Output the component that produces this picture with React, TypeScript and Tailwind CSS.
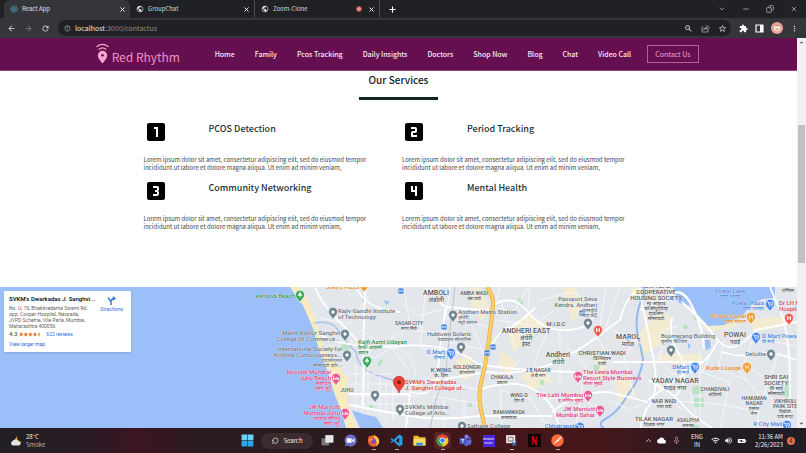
import type { ReactNode } from "react";
import { SiReact } from "react-icons/si";
import {
  MdLooks3,
  MdLooks4,
  MdLooksOne,
  MdLooksTwo,
  MdPublic,
  MdArrowBack,
  MdArrowForward,
  MdRefresh,
  MdInfoOutline,
  MdExtension,
  MdMoreVert,
  MdStarBorder,
  MdZoomOut,
  MdCloud,
  MdMicNone,
  MdWifi,
  MdVolumeUp,
  MdBatteryChargingFull,
  MdArrowDropUp,
  MdArrowDropDown,
} from "react-icons/md";
import { ChevronDown, ChevronUp, Copy, Minus, Plus, Search, X } from "lucide-react";

const sans = "font-['Noto_Sans_CJK_JP',sans-serif]";

/* ---------- browser chrome ---------- */

function Tab({ title, icon, active, recording }: { title: string; icon: ReactNode; active?: boolean; recording?: boolean }) {
  return (
    <div
      className={
        active
          ? "flex h-[18px] w-[126px] items-center gap-1 rounded-t-md bg-[#35363a] pr-1 pl-1.5 text-[#dfe1e5]"
          : "flex h-[18px] w-[125px] items-center gap-1 border-r border-[#4a4b4f] pr-1 pl-1.5 text-[#d4d7db]"
      }
    >
      {icon}
      <span className="flex-1 text-[6px] leading-[8px]">{title}</span>
      {recording && <span className="mr-0.5 size-[6px] rounded-full border border-[#a14a48] bg-[#f08a84]" />}
      <button aria-label={`Close ${title}`} className="text-white">
        <X size={7} strokeWidth={3} />
      </button>
    </div>
  );
}

function BrowserChrome() {
  return (
    <div className="shrink-0 bg-[#202124]">
      <div className="flex h-[18px] items-center pl-1">
        <Tab active title="React App" icon={<SiReact size={8} className="text-[#4fb0c8]" />} />
        <Tab title="GroupChat" icon={<MdPublic size={8} className="text-[#d5d7da]" />} />
        <Tab recording title="Zoom-Clone" icon={<MdPublic size={8} className="text-[#d5d7da]" />} />
        <button aria-label="New tab" className="ml-2 text-white">
          <Plus size={9} strokeWidth={3} />
        </button>
        <div className="ml-auto flex items-center gap-4 pr-2 text-[#c9cbce]">
          <button aria-label="Search tabs"><ChevronDown size={8} /></button>
          <button aria-label="Minimize"><Minus size={8} /></button>
          <button aria-label="Restore"><Copy size={8} className="-scale-x-100" /></button>
          <button aria-label="Close window"><X size={8} /></button>
        </div>
      </div>
      <div className="flex h-5 items-center gap-2 bg-[#35363a] px-[7px] text-[#dcdee1]">
        <button aria-label="Back"><MdArrowBack size={9} /></button>
        <button aria-label="Forward" className="text-[#7c7e82]"><MdArrowForward size={9} /></button>
        <button aria-label="Reload"><MdRefresh size={9} /></button>
        <div className="flex h-4 flex-1 items-center gap-2 rounded-full bg-[#202124] pr-1 pl-1.5">
          <MdInfoOutline size={7} className="text-[#a5a8ac]" />
          <div className="-ml-1 flex-1 text-[7px] leading-[10px] text-[#8b8e93]">
            <span className="text-[#e6e8eb]">localhost</span>:3000/contactus
          </div>
          <button aria-label="Zoom"><MdZoomOut size={9} /></button>
          <button aria-label="Share">
            <svg width="9" height="9" viewBox="0 0 18 18" fill="none" stroke="#a9abaf" strokeWidth="1.6">
              <path d="M5 6H2v10h12v-4M5 12c1-4 4-5 7-5V3l5 5-5 4V9C9 9 7 10 5 12z" />
            </svg>
          </button>
          <button aria-label="Bookmark"><MdStarBorder size={9} /></button>
        </div>
        <div className="flex items-center gap-[7px]">
          <button aria-label="Extensions"><MdExtension size={9} className="text-white" /></button>
          <button aria-label="Side panel">
            <svg width="9" height="9" viewBox="0 0 9 9"><path d="M1 1h7v7H1z" fill="none" stroke="#fff" strokeWidth="1.2" /><path d="M5 1h3v7H5z" fill="#fff" /></svg>
          </button>
          <button aria-label="Profile">
            <svg width="12" height="12" viewBox="0 0 12 12">
              <circle cx="6" cy="6" r="6" fill="#eaa39b" />
              <circle cx="6" cy="6" r="3.2" fill="#f4e2d2" />
              <path d="M3 4q3-3 6 0z" fill="#c98773" />
              <path d="M4.6 7.2h2.8" stroke="#96695b" strokeWidth=".6" />
            </svg>
          </button>
          <button aria-label="Menu"><MdMoreVert size={9} /></button>
        </div>
      </div>
    </div>
  );
}

/* ---------- site header ---------- */

const links = ["Home", "Family", "Pcos Tracking", "Daily Insights", "Doctors", "Shop Now", "Blog", "Chat", "Video Call"];

function SiteHeader() {
  return (
    <header className="flex h-[33px] shrink-0 items-center border-b border-[#8b4a7b] bg-[#650f50] pl-[12%]">
      <a href="#home" className="flex w-[119px] items-center text-[#f08fc2]">
        <svg width="13" height="22" viewBox="0 0 13 22" fill="none" stroke="#f9a4cf" strokeLinecap="round">
          <path d="M1 3.500Q6.500-.8 12 3.500M3 6.200Q6.500 3.400 10 6.200" strokeWidth="1.300" />
          <path d="M6.500 20.500C4 17 1.800 15 1.800 12.500a4.700 4.700 0 0 1 9.400 0C11.200 15 9 17 6.500 20.500z" fill="#f9a4cf" stroke="none" />
          <circle cx="6.500" cy="12.300" r="1.300" fill="#650f50" stroke="none" />
        </svg>
        <span className="mt-1.5 ml-[3px] text-[12px] leading-4 whitespace-nowrap">Red Rhythm</span>
      </a>
      <nav className="flex items-center gap-5 text-[7px] leading-3 font-medium whitespace-nowrap text-[#fbeaf5]">
        {links.map((l) => (
          <a key={l} href={`#${l}`}>{l}</a>
        ))}
        <a href="#contact" className="-ml-1 border border-[#b4619a] px-[7px] py-[2px] font-normal text-[#f0a5d0]">
          Contact Us
        </a>
      </nav>
    </header>
  );
}

/* ---------- services ---------- */

const services = [
  { title: "PCOS Detection", Icon: MdLooksOne },
  { title: "Period Tracking", Icon: MdLooksTwo },
  { title: "Community Networking", Icon: MdLooks3 },
  { title: "Mental Health", Icon: MdLooks4 },
];

function Services() {
  return (
    <section className="shrink-0 bg-white pb-14">
      <h2 className="text-center text-[10px] leading-[18px] font-medium text-[#14211f]">Our Services</h2>
      <div className="mx-auto mt-2 h-[3px] w-[79px] bg-[#10261f]" />
      <div className="mx-auto mt-5 grid max-w-[510px] grid-cols-2 gap-[7px]">
        {services.map(({ title, Icon }) => (
          <article key={title}>
            <div className="flex h-6 gap-[41px]">
              <Icon size={24} className="text-black" />
              <h3 className="text-[9px] leading-[18px] font-medium text-[#1c3038]">{title}</h3>
            </div>
            <p className="mt-3 pr-5 text-[6px] leading-[8px] text-[#444]">
              Lorem ipsum dolor sit amet, consectetur adipiscing elit, sed do eiusmod tempor incididunt ut labore et dolore magna aliqua. Ut enim ad minim veniam,
            </p>
          </article>
        ))}
      </div>
    </section>
  );
}

/* ---------- map ---------- */

type Label = { x: number; y: number; lines: string[]; color?: string; align?: "l" | "c" | "r"; big?: boolean; small?: boolean };

const GREY = "#5f6f7a";
const DARK = "#4d5256";
const PINK = "#e0347a";
const BLUE = "#3b7de0";
const GREEN = "#278a45";
const ORANGE = "#e08316";
const RED = "#d63a34";

/* x is the anchor edge and y the top of the first line, in map canvas pixels */
const labels: Label[] = [
  { x: 295, y: 6, lines: ["Versova Beach"], color: GREEN, align: "r" },
  { x: 326, y: -3, lines: ["Joey's Pizza"], color: ORANGE },
  { x: 436, y: 3, lines: ["AMBOLI", "अंबोली"], align: "c", big: true },
  { x: 474, y: 4, lines: ["AMBA WADI", "अंबा वाडी"], align: "c", small: true },
  { x: 338, y: 21, lines: ["Rajiv Gandhi Institute", "of Technology"], color: GREY },
  { x: 409, y: 34, lines: ["SAGAR CITY", "सागर सिटी"], align: "c", small: true },
  { x: 340, y: 43, lines: ["Malini Kishor Sanghvi", "College Of Commerce..."], color: GREY, align: "r" },
  { x: 358, y: 52, lines: ["Kaifi Azmi Udayan", "कैफी आझमी", "उद्यान"], color: GREEN },
  { x: 342, y: 59, lines: ["International Society for", "Krishna Consciousness...", "इंटरनॅशनल", "सोसायटी फॉर..."], color: GREY, align: "r" },
  { x: 331, y: 82, lines: ["Novotel Mumbai", "Juhu Beach", "नोव्होटेल", "मुंबई जुहू"], color: PINK, align: "r" },
  { x: 347, y: 101, lines: ["JUHU"], align: "c", small: true },
  { x: 340, y: 117, lines: ["JW Marriott", "Mumbai Juhu", "जेडब्ल्यू मॅरियट", "मुंबई जुहू"], color: PINK, align: "r" },
  { x: 405, y: 92, lines: ["SVKM's Dwarkadas", "J. Sanghvi College of..."], color: RED },
  { x: 405, y: 117, lines: ["SVKM's Mithibai", "College of Arts..."], color: GREY },
  { x: 458, y: 22, lines: ["Andheri Metro Station", "अंधेरी", "मेट्रो स्टेशन"], color: GREY },
  { x: 471, y: 44, lines: ["Hubtown Solaris", "हबटाउन सोलारिस"], color: GREY, align: "r" },
  { x: 445, y: 62, lines: ["D Mart", "डीमार्ट"], color: BLUE, align: "r" },
  { x: 441, y: 80, lines: ["K WING", "के. विंग"], align: "c" },
  { x: 467, y: 78, lines: ["KOLDONGRI", "कोलडोंगरी"], align: "c", small: true },
  { x: 526, y: 41, lines: ["ANDHERI EAST", "अंधेरी", "ईस्ट"], align: "c", big: true },
  { x: 556, y: 34, lines: ["M.I.D.C"], align: "c" },
  { x: 597, y: 9, lines: ["Passport Seva", "Kendra, Andheri", "पासपोर्ट", "सेवा केंद्र"], color: GREY, align: "r" },
  { x: 558, y: 65, lines: ["Andheri", "अंधेरी"], align: "c", big: true },
  { x: 602, y: 63, lines: ["CHRISTIAN WADI", "क्रिश्चियन", "वाडी"], align: "c" },
  { x: 538, y: 81, lines: ["J B NAGAR", "जे बी नगर"], align: "c", small: true },
  { x: 502, y: 88, lines: ["CHAKALA", "चकाला"], align: "c", small: true },
  { x: 519, y: 106, lines: ["WING-D", "विंग-डी"], align: "c", small: true },
  { x: 509, y: 123, lines: ["BAMANWADA", "बामणवाडा"], align: "c", small: true },
  { x: 583, y: 82, lines: ["The Leela Mumbai", "Resort Style Business", "लीला मुंबई"], color: PINK },
  { x: 583, y: 105, lines: ["The Lalit Mumbai", "द ललित मुंबई"], color: PINK, align: "r" },
  { x: 595, y: 119, lines: ["JW Marriott", "Mumbai Sahar"], color: PINK, align: "r" },
  { x: 467, y: 136, lines: ["Sathaye College"], color: GREY },
  { x: 576, y: 136, lines: ["Chhatrapati"], color: BLUE, align: "r" },
  { x: 656, y: -4, lines: ["NEW AZAD", "COOPERATIVE", "HOUSING SOCIETY", "न्यू आझाद", "कोऑपरेटिव्ह", "हाउसिंग", "सोसायटी"], align: "c" },
  { x: 628, y: 47, lines: ["MAROL", "मरोळ"], align: "c", big: true },
  { x: 730, y: 1, lines: ["Powai Lake", "पवई तलाव"], color: BLUE, align: "c" },
  { x: 788, y: 1, lines: ["एम्पिस"], align: "c" },
  { x: 764, y: 13, lines: ["Powai Plaza", "पवई प्लाझा"], color: BLUE, align: "r" },
  { x: 746, y: 26, lines: ["Powai Social", "पवई सोशल"], color: ORANGE, align: "r" },
  { x: 779, y: 13, lines: ["Dr LH Hiranandani", "Hospital"], color: RED },
  { x: 735, y: 45, lines: ["POWAI", "पवई"], align: "c", big: true },
  { x: 762, y: 46, lines: ["D Mart Powai", "डी मार्ट"], color: BLUE },
  { x: 661, y: 46, lines: ["Boomerang Building", "बूमरँग बिल्डिंग"], color: GREY },
  { x: 766, y: 64, lines: ["Deloitte"], color: GREY, align: "r" },
  { x: 689, y: 77, lines: ["DMart", "डी मार्ट"], color: BLUE, align: "r" },
  { x: 741, y: 78, lines: ["Rude Lounge"], color: ORANGE, align: "r" },
  { x: 675, y: 91, lines: ["YADAV NAGAR", "यादव नगर"], align: "c", big: true },
  { x: 776, y: 87, lines: ["SHRI SAI", "SOCIETY", "श्री साई", "सोसायटी"], align: "c" },
  { x: 715, y: 100, lines: ["CHANDIVALI", "चांदिवली"], align: "c", small: true },
  { x: 664, y: 112, lines: ["NAIR WADI", "नायर वाडी"], align: "c", small: true },
  { x: 754, y: 109, lines: ["HANUMAN", "NAGAR", "हनुमान", "नगर"], align: "c", small: true },
  { x: 785, y: 112, lines: ["VIKHROLI", "PARK SITE", "विक्रोळी", "पार्क साइट"], align: "c", small: true },
  { x: 654, y: 129, lines: ["TILAK NAGAR", "टिळक नगर"], align: "c" },
  { x: 688, y: 131, lines: ["ASALPHA", "असल्फा"], align: "c", small: true },
  { x: 782, y: 134, lines: ["R City Mall"], color: BLUE, align: "r" },
];

type Kind = "place" | "hotel" | "shop" | "food" | "hospital" | "park";
const pins: { x: number; y: number; fill: string; kind: Kind }[] = [
  { x: 300, y: 16, fill: "#34a853", kind: "park" },
  { x: 364, y: 6, fill: "#f29a26", kind: "food" },
  { x: 333, y: 33, fill: "#6b838f", kind: "place" },
  { x: 345, y: 55, fill: "#6b838f", kind: "place" },
  { x: 347, y: 76, fill: "#6b838f", kind: "place" },
  { x: 367, y: 82, fill: "#34a853", kind: "park" },
  { x: 336, y: 99, fill: "#ec5a92", kind: "hotel" },
  { x: 345, y: 134, fill: "#ec5a92", kind: "hotel" },
  { x: 375, y: 116, fill: "#6b838f", kind: "place" },
  { x: 400, y: 130, fill: "#6b838f", kind: "place" },
  { x: 453, y: 36, fill: "#6b838f", kind: "place" },
  { x: 461, y: 68, fill: "#6b838f", kind: "place" },
  { x: 451, y: 74, fill: "#4285f4", kind: "shop" },
  { x: 462, y: 147, fill: "#6b838f", kind: "place" },
  { x: 588, y: 44, fill: "#6b838f", kind: "place" },
  { x: 598, y: 51, fill: "#ee5a52", kind: "hospital" },
  { x: 578, y: 97, fill: "#ec5a92", kind: "hotel" },
  { x: 588, y: 116, fill: "#ec5a92", kind: "hotel" },
  { x: 600, y: 131, fill: "#ec5a92", kind: "hotel" },
  { x: 580, y: 148, fill: "#4285f4", kind: "shop" },
  { x: 770, y: 25, fill: "#4285f4", kind: "shop" },
  { x: 751, y: 38, fill: "#f29a26", kind: "food" },
  { x: 789, y: 39, fill: "#ee5a52", kind: "hospital" },
  { x: 756, y: 58, fill: "#4285f4", kind: "shop" },
  { x: 671, y: 71, fill: "#6b838f", kind: "place" },
  { x: 771, y: 75, fill: "#6b838f", kind: "place" },
  { x: 695, y: 88, fill: "#4285f4", kind: "shop" },
  { x: 747, y: 88, fill: "#f29a26", kind: "food" },
  { x: 787, y: 146, fill: "#4285f4", kind: "shop" },
];

const glyphs: Record<Kind, ReactNode> = {
  place: <circle cy="-8" r="1.700" fill="#fff" />,
  hotel: <path d="M-2.500-9.500v3.500M-2.500-7h5v1M-.5-8h3v1" stroke="#fff" strokeWidth=".9" fill="none" />,
  shop: <path d="M-2.800-10h1.200l.8 3h3l.6-2.200h-3.800M-.6-5.500v.2M1.800-5.500v.2" stroke="#fff" strokeWidth=".8" strokeLinecap="round" fill="none" />,
  food: <path d="M-1.300-10.200v4.800M1.300-10.200v4.800M-1.300-8h2.600" stroke="#fff" strokeWidth=".8" fill="none" />,
  hospital: <path d="M-1.400-10v4M1.400-10v4M-1.400-8h2.800" stroke="#fff" strokeWidth="1" fill="none" />,
  park: <path d="M0-10.800l2 3.300h-4zM0-8v3" fill="#fff" stroke="#fff" strokeWidth=".6" />,
};

function MapDrawing() {
  return (
    <svg width="797" height="141" viewBox="0 287 797 141" className="absolute inset-0" fill="none" aria-hidden="true">
      <path d="M290 287L303 305L313 328L320 352L328 372L335 395L342 412L346 428H797V287z" fill="#e3e6eb" />
      <path d="M290 287L303 305L313 328L320 352L328 372L335 395L342 412L346 428H358L350 411L346 392L348 378L338 366L326 352L318 328L310 304L300 287z" fill="#f8ebc0" />
      <g fill="#f3ecd3">
        <path d="M470 287h10l10 22-8 12-11-14zM508 330l22-16 14 10-16 18-16 10zM562 288h14l6 24-10 10zM520 376l20-10 14 14-22 10zM456 360l14-4 4 20-12 6zM640 332l20-20 14 6-10 24-22 14zM658 354h44v8h-44zM614 380l14-6 8 20-16 10zM700 322l28-6 10 10-30 6zM748 320l34-4 4 10-32 6zM500 350l16 10-6 16-12-8zM596 350h12l-4 30h-10zM630 287h12l-6 14z" />
      </g>
      <g fill="#b9e3c4">
        <path d="M343 341l7 6-3 6-7-4zM367 358l6 1-1 3-5-1zM377 364l5-6 1 4-4 5zM344 343l6 4-3 3zM367 402l7 4-2 3-6-4zM518 298h5v8h-4zM594 364l6 2-2 8-5-4zM684 324l4 2-1 4-4-2zM692 387l9-2 2 8-10 2zM694 398h10v9h-11zM786 380l5 2-2 16-6-2zM692 425h9v3h-9zM362 295h3v7h-3zM468 402h4v5h-4zM694 312h4v8h-4zM540 380h4v5h-4z" />
      </g>
      <path d="M352 410L363 414L376 417L383 428H360z" fill="#9bbff9" />
      <path d="M673 287L679 303L690 306L700 317L708 326L724 325L742 316L750 306L762 299L775 298L775 287zM704 340l6 0 1 8-5 2-3-4zM688 343l3 3-3 3zM384 300l6 2-4 3z" fill="#9bbff9" />
      <path d="M314 323Q332 320 338 330T356 352Q358 368 374 374T402 382L410 385" stroke="#abc4ee" strokeWidth="1.500" />
      <path d="M641 300Q634 320 638 336T643 360Q640 380 627 396Q618 412 607 418T604 428M642 287Q648 293 641 300" stroke="#96b9f0" strokeWidth="2" />

      <g stroke="#f7f8fa" strokeWidth=".9">
        <path d="M349 374h43M349 384h70M352 396h68M354 404h60M356 364v48M362 362v50M368 368v44M380 376v40M386 380v40M393 384v36M350 340l24 18M374 358l18-10 18 24M392 348q20 0 24 28M398 300l20 16 30-8M404 287l6 40-20 12M426 287l-6 60 24 10M412 330l36 4M430 380l50 10M432 396l48 8M444 400v28M464 396v32M426 356l20-14 40 8M450 287l-4 30 44 10M500 287l-6 20 20 6 14-26M498 320l36 6 20-16M530 287l-6 60M540 300l32-8 22 12M548 330l-14 34 20 22M560 330v54M500 390l30 8 18 30M520 360l-20 24 2 44M540 400l40-6 20 20M606 287l-8 50 14 30M612 330l30 14M620 287l-14 40M644 330l-20 26 10 40M650 350l22 24 30-2M650 380l32 30M660 360l4-30 14-4M700 350v70M712 352l-10 20 26 10M724 340l-6 30 30 10M730 380l-10 48M738 370l20 24v34M756 330l-12 34 30 20M764 340l32 6M780 350l-16 44 30 16M660 400l60 4M690 392l10 36M720 404l40 8M610 400l20 10 16-8M500 300l16 50M566 346l20 20-10 60M466 310l20 50M320 318l30 6 20-30M360 330l20 12" />
      </g>
      <g stroke="#fff" strokeWidth="1.800">
        <path d="M315 287Q322 304 334 316T360 344L370 352M365 287L364 326Q362 346 364 370L363 408M318 334Q350 350 400 346T478 364Q500 368 530 370T580 372M432 287Q436 302 446 307L492 311M446 307Q440 340 438 370T410 392L406 428M350 405Q380 411 410 416T480 416L552 416M356 287Q366 310 400 312M348 394h62M410 385l70-12M492 306q20-14 36 6t40 18 24 -14M487 352q16-26 20-24t28-20M478 390q30-10 48-4t28 24l6 18M486 372Q530 376 560 360T606 330L620 320Q626 294 644 287M552 412q24-20 56-20l40 10M640 294Q648 330 654 362T646 410L640 428M648 380Q670 390 682 404T712 428M612 362h92M682 302Q704 322 718 340T756 330L797 322M672 318q-4 20 8 38t-4 40M718 340q-8 20-26 30t-44 30M770 287L784 320Q790 350 790 380T788 428M722 352q20 6 34 2t40 6" />
        <path d="M704 349Q704 330 692 306T666 300L640 310" strokeWidth="2.400" />
      </g>
      <path d="M455 287L450 330L446 370L436 400L430 428" stroke="#bfc4cb" strokeWidth="1" />
      <path d="M487 287Q494 297 493 305Q491 325 488 346Q486 364 481 383Q478 396 481 410L485 428" stroke="#e8a93a" strokeWidth="4" />
      <path d="M487 287Q494 297 493 305Q491 325 488 346Q486 364 481 383Q478 396 481 410L485 428" stroke="#fcd067" strokeWidth="2.600" />

      {[[401, 291], [444, 327], [493, 347], [487, 353], [582, 313]].map(([x, y]) => (
        <g key={x}>
          <rect x={x - 2.5} y={y - 2.5} width="5" height="5" rx=".6" fill="#2f7be5" />
          <path d={`M${x - 1.3} ${y + 1.3}v-2.4l1.300 1.600 1.300-1.600v2.400`} stroke="#fff" strokeWidth=".7" />
        </g>
      ))}
      {pins.map((p) => (
        <g key={`${p.x}-${p.y}`} transform={`translate(${p.x} ${p.y + 287})`}>
          <path d="M0 0C-.5-3-4.500-4.500-4.500-8.200a4.500 4.500 0 0 1 9 0C4.500-4.500.5-3 0 0z" fill={p.fill} stroke="#fff" strokeWidth=".6" />
          {glyphs[p.kind]}
        </g>
      ))}
      <g transform="translate(399 393)">
        <path d="M0 0C-.8-4.500-5.700-6.500-5.700-11a5.700 5.700 0 0 1 11.400 0C5.700-6.500.8-4.500 0 0z" fill="#ea4335" stroke="#c5221f" strokeWidth=".6" />
        <circle cy="-10.800" r="2" fill="#8f1a14" />
      </g>
    </svg>
  );
}

function MapLabel({ x, y, lines, color = DARK, align = "l", big, small }: Label) {
  const shift = align === "r" ? "-translate-x-full text-right" : align === "c" ? "-translate-x-1/2 text-center" : "";
  const latin = big ? "text-[7px] leading-[7px]" : small ? "text-[5px] leading-[5px]" : "text-[6px] leading-[6px]";
  const local = big ? "text-[6px] leading-[6px]" : small ? "text-[4px] leading-[5px]" : "text-[5px] leading-[5px]";
  return (
    <div
      className={`absolute font-medium whitespace-nowrap [text-shadow:0_0_1px_#fff,0_0_1px_#fff] ${shift}`}
      style={{ left: x, top: y, color }}
    >
      {lines.map((l) => (
        <div key={l} className={/[\u0900-\u097f]/.test(l) ? local : latin}>
          {l}
        </div>
      ))}
    </div>
  );
}

function MapCard() {
  return (
    <div className="absolute top-1 left-1 flex w-[127px] justify-between bg-white py-1 pr-2 pl-[5px] shadow-sm">
      <div className="text-[5px] leading-[6px] whitespace-nowrap text-[#5f5f5f]">
        <h4 className="text-[6px] leading-[8px] font-medium text-black">SVKM's Dwarkadas J. Sanghvi...</h4>
        <address className="mt-[2px] not-italic">
          No. U, 15, Bhaktivedanta Swami Rd,
          <br />
          opp. Cooper Hospital, Navpada,
          <br />
          JVPD Scheme, Vile Parle, Mumbai,
          <br />
          Maharashtra 400056
        </address>
        <div className="mt-px flex items-center leading-[8px]">
          <span className="text-[6px] text-[#333]">4.3</span>
          <svg width="23" height="5" viewBox="0 0 23 5" className="mx-0.5" fill="#e7711b">
            {[0, 4.6, 9.2, 13.8].map((x) => (
              <path key={x} transform={`translate(${x} 0)`} d="M2.200 0l.6 1.600 1.700.1-1.300 1.100.4 1.700-1.400-.9-1.500.9.500-1.700L0 1.700l1.600-.1z" />
            ))}
            <path d="M20.600 0v3.600l-1.500.9.500-1.700-1.200-1.100 1.600-.1z" />
          </svg>
          <a href="#reviews" className="ml-0.5 text-[#2a6be0]">622 reviews</a>
        </div>
        <a href="#larger" className="mt-[3px] block leading-[7px] text-[#2a6be0]">View larger map</a>
      </div>
      <a href="#directions" className="mt-px flex flex-col items-center text-[5px] leading-[8px] text-[#2a6be0]">
        <svg width="9" height="9" viewBox="0 0 9 9" fill="none" stroke="#3b78e7" strokeWidth="1.500">
          <path d="M4 9V5.500L1 1.500M4 5.500Q4.500 2.800 7 2.500" />
          <path d="M5.800 0L9 2.300 6.200 4.800z" fill="#3b78e7" stroke="none" />
        </svg>
        Directions
      </a>
    </div>
  );
}

function CampusMap() {
  return (
    <section className="relative flex-1 overflow-hidden bg-[#9bbff9] font-[Roboto,'Noto_Sans',sans-serif]">
      <MapDrawing />
      {labels.map((l) => (
        <MapLabel key={l.lines.join() + l.x} {...l} />
      ))}
      <MapCard />
    </section>
  );
}

/* ---------- taskbar ---------- */

function App({ name, children, running }: { name: string; children: ReactNode; running?: boolean }) {
  return (
    <button aria-label={name} className="relative flex size-[15px] items-center justify-center">
      <svg width="13" height="13" viewBox="0 0 24 24">{children}</svg>
      {running && <span className="absolute -bottom-0.5 h-px w-1 bg-[#b8a8a8]" />}
    </button>
  );
}

function Taskbar() {
  return (
    <footer className="flex h-[25px] shrink-0 items-center bg-[linear-gradient(90deg,#211f24_0%,#2a1b24_11%,#3b1422_17%,#291b20_25%,#291b1d_40%,#421519_55%,#46171a_75%,#221c24_88%,#211d25_100%)] text-[#eee]">
      <div className="flex flex-1 items-center gap-1 pl-2.5 text-[6px] leading-[8px]">
        <svg width="12" height="12" viewBox="0 0 24 24">
          <path d="M15 1a9 9 0 0 0 8 13 9 9 0 0 1-8 4L10 9z" fill="#f5ae36" />
          <path d="M5 21a5 5 0 0 1 0-9 6 6 0 0 1 11 1 4 4 0 0 1 2 8z" fill="#dfe3ea" />
        </svg>
        <div>
          <div>28°C</div>
          <div className="text-[#b9b4b7]">Smoke</div>
        </div>
      </div>
      <div className="flex items-center gap-2">
        <App name="Start">
          <path d="M1 1h10.500v10.500H1zM12.500 1H23v10.500H12.500z" fill="#67d3f8" />
          <path d="M1 12.500h10.500V23H1zM12.500 12.500H23V23H12.500z" fill="#27a8ea" />
        </App>
        <button className="mr-[-1px] -ml-0.5 flex h-4 w-[52px] items-center justify-center gap-1 rounded-full bg-[#3b2b2e] text-[6px] leading-[8px] text-[#eee]">
          <Search size={8} className="-scale-x-100" /> Search
        </button>
        <App name="Task view">
          <path d="M1 8h14v13H1z" fill="#77777a" /><path d="M8 2h15v14H8z" fill="#e6e6e6" />
        </App>
        <App name="Chat">
          <path d="M12 1a11 11 0 1 1-6 20l-5 2 2-5A11 11 0 0 1 12 1z" fill="#6d6bc9" />
          <path d="M5 8h9v8H5zM15 11l4-3v8l-4-3z" fill="#fff" />
        </App>
        <App name="Firefox" running>
          <circle cx="12" cy="13" r="10.500" fill="#f4632e" />
          <path d="M13 1c2 4 9 5 9.500 12 .2 5-3 9-7 10 5-5 2-12-2-14z" fill="#ffc93a" />
          <path d="M2 8l2-5 4 4z" fill="#f4632e" />
          <circle cx="11.500" cy="13" r="5" fill="#7b4bc4" />
          <path d="M4 10q5-3 8 1-5 0-5 4z" fill="#ff9640" />
        </App>
        <App name="Visual Studio Code" running>
          <path d="M17 1l6 3v16l-6 3L6.500 13.500 3 16.500 1 15l3.500-3L1 9l2-1.500 3.500 3zM17 7l-6.500 5 6.500 5z" fill="#289de6" fillRule="evenodd" />
        </App>
        <App name="File Explorer">
          <path d="M1 3h8l3 3h11v15H1z" fill="#f2b92f" /><path d="M1 9h22v12H1z" fill="#ffdb68" /><path d="M6 16h12v5H6z" fill="#3c8fd8" />
        </App>
        <span className="-m-px flex rounded-sm bg-[#592529] p-px">
          <App name="Chrome" running>
            <circle cx="12" cy="12" r="11" fill="#fbc618" />
            <path d="M12 12L2.500 6.500A11 11 0 0 1 21.500 6.500z" fill="#e5402f" />
            <path d="M12 12L2.500 6.500A11 11 0 0 0 11.500 23z" fill="#2da14c" />
            <circle cx="12" cy="12" r="5.400" fill="#fff" /><circle cx="12" cy="12" r="4.200" fill="#3c7fee" />
          </App>
        </span>
        <App name="Teams">
          <circle cx="14" cy="5" r="4" fill="#7b83eb" /><circle cx="20" cy="7" r="2.500" fill="#5059c9" />
          <path d="M8 10h15v6q-1 5-5 4-3 4-8 1z" fill="#6068d2" /><path d="M1 7h12v12H1z" fill="#4b53bc" />
          <path d="M4 10.500h6M7 10.500V16" stroke="#fff" strokeWidth="1.600" />
        </App>
        <button aria-label="Amazon Music" className="flex size-[15px] items-center justify-center">
          <span className="flex size-3 flex-col items-center justify-center bg-[#4b24dd] text-[3px] leading-[4px] text-white">
            <span>amazon</span>
            <span>music</span>
          </span>
        </button>
        <App name="Snipping Tool" running>
          <path d="M2 2h17v15H2z" fill="#e9e4e4" /><path d="M6 6h9v7H6z" fill="none" stroke="#7a5c60" strokeWidth="1.500" />
          <path d="M12 13l9 8M21 13l-7 9" stroke="#3f93cf" strokeWidth="2" />
        </App>
        <App name="Netflix">
          <path d="M0 0h24v24H0z" fill="#0c0606" /><path d="M7 4h3v16H7zM14 4h3v16h-3z" fill="#b20710" /><path d="M7 4h3l7 16h-3z" fill="#e50914" />
        </App>
        <App name="Postman" running>
          <circle cx="12" cy="12" r="11.500" fill="#fb6d3a" />
          <path d="M5 18l8-9 3 2-8 6zM14 8l4-3 1 3-3 2z" fill="#fff" />
        </App>
      </div>
      <div className="flex flex-1 items-center justify-end pr-[11px] text-[6px] leading-[8px]">
        <ChevronUp size={9} className="mr-1" />
        <MdCloud size={9} className="mr-1.5 text-white" />
        <MdMicNone size={9} className="mr-2.5 text-[#c98e86]" />
        <div className="mr-2 text-center">
          <div>ENG</div>
          <div>IN</div>
        </div>
        <MdWifi size={9} className="mr-1" />
        <MdVolumeUp size={9} className="mr-1" />
        <MdBatteryChargingFull size={10} className="mr-2 rotate-90 text-white" />
        <div className="mr-1 text-right whitespace-nowrap">
          <div>11:36 AM</div>
          <div>2/26/2023</div>
        </div>
        <span className="flex size-2 items-center justify-center rounded-full bg-[#e2714f] text-[6px] leading-[8px] text-[#3a1a14]">4</span>
      </div>
    </footer>
  );
}

export default function Desktop() {
  return (
    <div className={`flex h-screen flex-col overflow-hidden bg-white ${sans}`}>
      <BrowserChrome />
      <div className="flex min-h-0 flex-1">
        <main className="flex min-w-0 flex-1 flex-col">
          <SiteHeader />
          <Services />
          <CampusMap />
        </main>
        <div className="flex w-[9px] shrink-0 flex-col items-center bg-[#f1f1f1] text-[#555]">
          <MdArrowDropUp size={9} />
          <div className="mt-[78px] h-[138px] w-[7px] bg-[#c1c1c1]" />
          <MdArrowDropDown size={9} className="mt-auto" />
        </div>
      </div>
      <Taskbar />
    </div>
  );
}
